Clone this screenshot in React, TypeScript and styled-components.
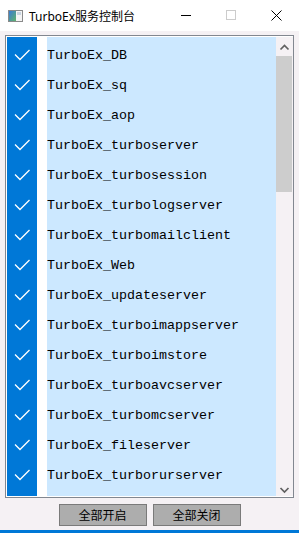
import React from "react";
import styled, { createGlobalStyle } from "styled-components";

const Global = createGlobalStyle`
  html, body { margin: 0; padding: 0; background: #f5f1f4; }
  body { font-family: "Noto Sans", "Noto Sans CJK SC", sans-serif; }
`;

const Window = styled.div`
  width: 299px;
  height: 533px;
  display: flex;
  flex-direction: column;
  background: #f5f1f4;
  overflow: hidden;
`;

const TitleBar = styled.div`
  height: 31px;
  flex: none;
  background: #ffffff;
  display: flex;
  align-items: center;
  padding-left: 8px;
`;

const Title = styled.span`
  margin-left: 6px;
  font-size: 12px;
  color: #000;
  font-family: "Noto Sans", "Noto Sans CJK SC", sans-serif;
  flex: 1;
  white-space: nowrap;
`;

const Caption = styled.div`
  width: 45px;
  height: 31px;
  display: flex;
  align-items: center;
  justify-content: center;
`;

const Content = styled.div`
  flex: 1;
  display: flex;
  flex-direction: column;
  padding: 4px 5px 0;
`;

const ListBox = styled.div`
  height: 463px;
  box-sizing: border-box;
  border: 1px solid #828790;
  background: #ffffff;
  padding: 1px 0 1px 1px;
  display: flex;
`;

const Items = styled.div`
  width: 270px;
  overflow: hidden;
  display: flex;
  flex-direction: column;
`;

const Row = styled.div<{ $filler?: boolean }>`
  height: ${(p) => (p.$filler ? "auto" : "30px")};
  flex: ${(p) => (p.$filler ? "1" : "none")};
  display: flex;
`;

const CheckCell = styled.div`
  width: 30px;
  background: #0078d7;
  display: flex;
`;

const Gap = styled.div`
  width: 10px;
  background: #ffffff;
`;

const Label = styled.div`
  flex: 1;
  background: #cce8ff;
  font-family: "Liberation Mono", monospace;
  font-size: 13.33px;
  line-height: 24px;
  padding-top: 7px;
  box-sizing: border-box;
  color: #000;
  white-space: nowrap;
  overflow: hidden;
`;

const ScrollBar = styled.div`
  width: 17px;
  background: #f5f1f4;
  display: flex;
  flex-direction: column;
`;

const ScrollBtn = styled.div`
  height: 18px;
  flex: none;
  display: flex;
`;

const Thumb = styled.div`
  height: 136px;
  margin: 1px 1px 0 0;
  background: #cdcdcd;
`;

const Spacer = styled.div`
  flex: 1;
`;

const ButtonRow = styled.div`
  display: flex;
  justify-content: center;
  gap: 6px;
  margin-top: 6px;
`;

const Button = styled.button`
  width: 88px;
  height: 22px;
  box-sizing: border-box;
  border: 1px solid #7a7a7a;
  background: #adadad;
  font-family: "Noto Sans CJK SC", sans-serif;
  font-size: 12px;
  line-height: 14px;
  color: #000;
  padding: 0;
  display: flex;
  align-items: center;
  justify-content: center;
`;

const BottomEdge = styled.div`
  height: 3px;
  flex: none;
  background: #0078d7;
`;

const services = [
  "TurboEx_DB",
  "TurboEx_sq",
  "TurboEx_aop",
  "TurboEx_turboserver",
  "TurboEx_turbosession",
  "TurboEx_turbologserver",
  "TurboEx_turbomailclient",
  "TurboEx_Web",
  "TurboEx_updateserver",
  "TurboEx_turboimappserver",
  "TurboEx_turboimstore",
  "TurboEx_turboavcserver",
  "TurboEx_turbomcserver",
  "TurboEx_fileserver",
  "TurboEx_turborurserver",
];

const AppIcon = () => (
  <svg width="15" height="12" viewBox="0 0 15 12">
    <defs>
      <linearGradient id="ig" x1="0" y1="0" x2="1" y2="1">
        <stop offset="0" stopColor="#3a7bd5" />
        <stop offset="1" stopColor="#5fb36a" />
      </linearGradient>
    </defs>
    <rect x="0.5" y="0.5" width="14" height="11" fill="#f4f4f4" stroke="#8a8a8a" />
    <rect x="1" y="1" width="7" height="10" fill="url(#ig)" />
    <rect x="9" y="2" width="4" height="3" fill="#c8d4e0" />
  </svg>
);

const Check = () => (
  <svg width="30" height="30" viewBox="0 0 30 30">
    <polyline points="8,17.5 13,22.5 22.5,13" fill="none" stroke="#ffffff" strokeWidth="1.3" />
  </svg>
);

export default function App() {
  return (
    <>
      <Global />
      <Window>
        <TitleBar>
          <AppIcon />
          <Title>TurboEx服务控制台</Title>
          <Caption>
            <svg width="11" height="11" viewBox="0 0 11 11">
              <line x1="0" y1="5.5" x2="10" y2="5.5" stroke="#000" strokeWidth="1" />
            </svg>
          </Caption>
          <Caption>
            <svg width="11" height="11" viewBox="0 0 11 11">
              <rect x="0.5" y="0.5" width="9" height="9" fill="none" stroke="#cccccc" strokeWidth="1" />
            </svg>
          </Caption>
          <Caption>
            <svg width="12" height="12" viewBox="0 0 12 12">
              <path d="M0.5 0.5 L10.5 10.5 M10.5 0.5 L0.5 10.5" stroke="#000" strokeWidth="1" />
            </svg>
          </Caption>
        </TitleBar>
        <Content>
          <ListBox>
            <Items>
              {services.map((s) => (
                <Row key={s}>
                  <CheckCell>
                    <Check />
                  </CheckCell>
                  <Gap />
                  <Label>{s}</Label>
                </Row>
              ))}
              <Row $filler>
                <CheckCell />
                <Gap />
                <Label />
              </Row>
            </Items>
            <ScrollBar>
              <ScrollBtn>
                <svg width="17" height="18" viewBox="0 0 17 18">
                  <polyline points="4.5,12.5 8.5,8.5 12.5,12.5" fill="none" stroke="#606060" strokeWidth="1.7" />
                </svg>
              </ScrollBtn>
              <Thumb />
              <Spacer />
              <ScrollBtn>
                <svg width="17" height="18" viewBox="0 0 17 18">
                  <polyline points="4.5,10 8.5,14 12.5,10" fill="none" stroke="#606060" strokeWidth="1.7" />
                </svg>
              </ScrollBtn>
            </ScrollBar>
          </ListBox>
          <ButtonRow>
            <Button>全部开启</Button>
            <Button>全部关闭</Button>
          </ButtonRow>
          <Spacer />
        </Content>
        <BottomEdge />
      </Window>
    </>
  );
}
